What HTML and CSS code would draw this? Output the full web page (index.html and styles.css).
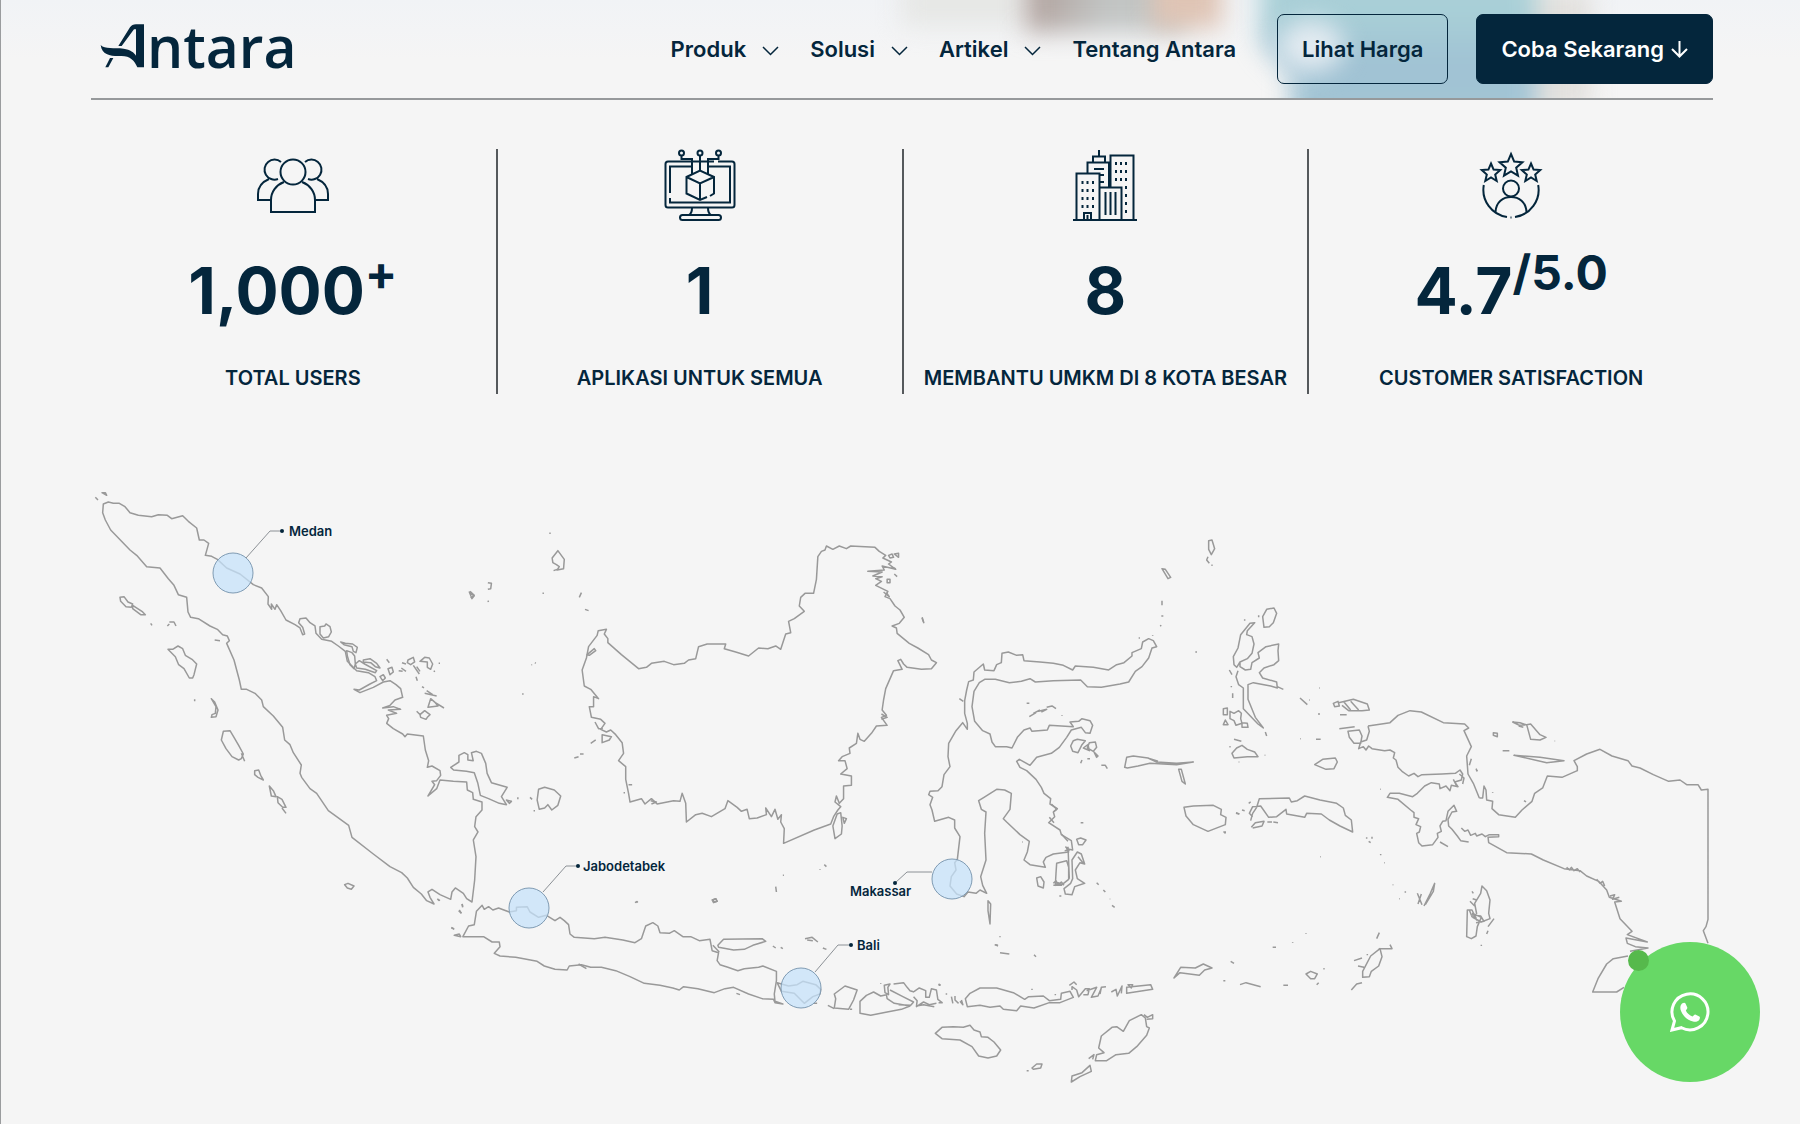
FILE: index.html
```html
<!DOCTYPE html>
<html lang="id">
<head>
<meta charset="utf-8">
<meta name="viewport" content="width=device-width, initial-scale=1">
<title>Antara</title>
<link rel="stylesheet" href="styles.css">
</head>
<body>
<header class="site-header">
  <div class="backdrop" aria-hidden="true">
    <span class="glow glow-sand"></span>
    <span class="glow glow-brown"></span>
    <span class="glow glow-peach"></span>
    <span class="glow glow-edge"></span>
    <span class="glow glow-blue"></span>
    <span class="glow glow-shine"></span>
  </div>
  <div class="header-inner">
    <a class="logo" href="#" aria-label="Antara">
      <svg class="logo-mark" viewBox="54 48 138 138" aria-hidden="true">
        <path d="M59 117C72 131 98 124 128 128C148 131 159 139 165 149V70H159L122 120H112L147 64Q153 55 165 55H189V184H169C161 164 147 150 122 150C92 151 63 149 59 117Z"/>
        <path d="M87 156H97L82 184H73Z"/>
      </svg>
      <span class="logo-text">ntara</span>
    </a>
    <nav class="nav">
      <button class="nav-item" type="button">Produk<svg class="chevron" viewBox="0 0 17 10" aria-hidden="true"><path d="M1 1l7.500 7.500L16 1"/></svg></button>
      <button class="nav-item" type="button">Solusi<svg class="chevron" viewBox="0 0 17 10" aria-hidden="true"><path d="M1 1l7.500 7.500L16 1"/></svg></button>
      <button class="nav-item" type="button">Artikel<svg class="chevron" viewBox="0 0 17 10" aria-hidden="true"><path d="M1 1l7.500 7.500L16 1"/></svg></button>
      <a class="nav-item" href="#">Tentang Antara</a>
    </nav>
    <div class="actions">
      <a class="btn btn-outline" href="#">Lihat Harga</a>
      <a class="btn btn-solid" href="#">Coba Sekarang<svg class="arrow" viewBox="0 0 17 18" aria-hidden="true"><path d="M8.500 1v15M1 9l7.500 7.500L16 9"/></svg></a>
    </div>
  </div>
</header>

<main class="page">
  <section class="stats">
    <div class="stat">
      <svg class="stat-icon" viewBox="0 0 72 72" aria-hidden="true">
        <circle cx="36" cy="23" r="12.500"/>
        <path d="M27 33C19 36 14 43 14 51V63H58V51C58 43 53 36 45 33"/>
        <path d="M24 13A10 10 0 1 0 21 30M12 30C5 33 1 38 1 45V51H14M48 13A10 10 0 1 1 51 30M60 30C67 33 71 38 71 45V51H58"/>
      </svg>
      <p class="stat-value">1,000<sup>+</sup></p>
      <p class="stat-label">TOTAL USERS</p>
    </div>
    <div class="stat">
      <svg class="stat-icon" viewBox="0 0 72 72" aria-hidden="true">
        <path d="M50 12.500H4Q1.500 12.500 1.500 15V56Q1.500 58.500 4 58.500H68Q70.500 58.500 70.500 56V15Q70.500 12.500 68 12.500H54"/>
        <path d="M28 17.500H6V44M6 49V53.500H66V17.500H44"/>
        <circle cx="17.500" cy="4" r="2.500"/><circle cx="36" cy="4" r="2.500"/><circle cx="54.500" cy="4" r="2.500"/>
        <path d="M17.500 6.500V10H28V25M36 6.500V21M54.500 6.500V10H44V25"/>
        <path d="M46 47L50 44.500V28L36 21.500L22.500 28V44.500L36 51L43 48M22.500 28L36 34.500L50 28M36 34.500V51"/>
        <path d="M28 59Q28 64 25 66M44 59Q44 64 47 66"/>
        <rect x="16" y="66" width="41" height="5" rx="2.500"/>
      </svg>
      <p class="stat-value">1</p>
      <p class="stat-label">APLIKASI UNTUK SEMUA</p>
    </div>
    <div class="stat">
      <svg class="stat-icon" viewBox="0 0 72 72" aria-hidden="true">
        <path d="M4 71H68M7.500 71V24.500H30.500V71M18.500 24.500V13.500H40V38M24 13.500V7.500H36V13.500M30 7.500V1M41.500 38V6.500H64.500V71M31 38.500H52.500V71M36.500 43V66M41.500 43V66M46.500 43V66M25 20H35M31 26H35M31 33H35M15 71V64H22V71M18.500 66V70"/>
        <path stroke-dasharray="3 5" d="M13.500 32V60M18.500 32V60M24 32V60M47 13V34M52 13V34M57 13V66"/>
      </svg>
      <p class="stat-value">8</p>
      <p class="stat-label">MEMBANTU UMKM DI 8 KOTA BESAR</p>
    </div>
    <div class="stat">
      <svg class="stat-icon" viewBox="0 0 72 72" aria-hidden="true">
        <path d="M36 5L39.200 12.600L47.400 13.300L41.200 18.700L43 26.700L36 22.500L29 26.700L30.800 18.700L24.600 13.300L32.800 12.600Z"/>
        <path d="M16 14.500L18.600 20.600L25.200 21.100L20.200 25.500L21.700 32L16 28.500L10.300 32L11.800 25.500L6.800 21.100L13.400 20.600Z"/>
        <path d="M56 14.500L58.600 20.600L65.200 21.100L60.200 25.500L61.700 32L56 28.500L50.300 32L51.800 25.500L46.800 21.100L53.400 20.600Z"/>
        <circle cx="36" cy="39.500" r="8"/>
        <path d="M20.500 63C21 53 28 48 36 48S51 53 51.500 63"/>
        <path d="M8.800 36A27.500 27.500 0 0 0 32 68M63.200 36A27.500 27.500 0 0 1 40 68M35.500 68.500H36.500"/>
      </svg>
      <p class="stat-value">4.7<sup>/5.0</sup></p>
      <p class="stat-label">CUSTOMER SATISFACTION</p>
    </div>
  </section>

  <svg class="map" viewBox="90 480 1623 620" role="img" aria-label="Peta Indonesia">
    <g class="coast">
      <!-- Sumatra and the islands off both of its coasts -->
      <g transform="translate(80 480) scale(.33333)">
        <path d="M70 72L85 66 100 70 118 70 135 80 150 98 175 106 215 110 235 104 262 106 275 116 308 107 325 124 350 144 358 180 372 180 386 190 380 212 376 226 395 229 412 238 440 264 480 282 520 314 545 324 565 350 564 372 575 388 574 372 585 388 590 374 602 392 618 420 645 434 660 444 668 464 674 462 668 442 656 428 660 416 678 414 690 428 705 438 708 460 725 478 755 484 775 498 796 514 802 544 830 572 865 578 885 590 890 602 870 612 838 630 822 628 840 638 880 622 910 606 930 602 948 614 962 626 968 652 945 660 930 676 908 684 940 680 962 688 925 690 950 700 920 706 926 716 920 730 940 746 968 762 975 770 982 762 1030 768 1036 810 1046 842 1042 862 1056 858 1080 872 1082 886 1070 902 1056 904 1064 914 1044 948 1070 926 1080 900 1120 904 1160 906 1162 930 1178 938 1180 958 1206 966 1206 990 1188 1010 1184 1040 1194 1056 1180 1080 1188 1130 1184 1200 1176 1266 1160 1256 1150 1240 1126 1224 1116 1236 1112 1258 1080 1244 1056 1228 1044 1236 1050 1252 1062 1272 1040 1262 1024 1242 1000 1222 982 1194 965 1178 930 1160 880 1122 816 1072 806 1036 745 992 710 940 690 926 665 892 660 880 664 855 640 818 630 794 614 780 608 742 580 708 550 680 545 660 525 640 500 628 484 628 478 600 462 540 440 490 448 482 442 468 428 464 412 448 390 438 355 416 332 412 324 396 320 352 295 344 282 316 265 296 240 264 200 260 170 226 150 210 92 150 76 120 68 98Z"/>
        <path d="M66 38l14 8 -4 -8zM46 52l8 8M120 352l12 -2 12 16 14 6 -4 10 -16 -2 -16 -16zM158 376l30 20 8 8 -14 0 -24 -18zM212 430l4 6M262 438l6 -6M268 426l14 0 6 12M404 480l16 2M264 508l14 0 16 -10 14 8 8 20 20 12 14 14 -8 32 -4 10 -10 0 -16 -28 -16 -12 -10 -24 -20 -20zM344 658v6M394 656l10 10 10 24 -6 20 -14 2 2 -8 10 -4 2 -20zM430 754l20 -2 12 20 14 24 14 26 -6 14 -8 4 -20 -10 -18 -24 -14 -26zM484 820l10 24M524 872l12 -2 6 16 8 14 -16 -8 -10 -8zM568 918l12 14 8 18 -14 -2zM592 950l14 8 12 24 -10 0 -14 -14zM606 984l12 16M794 1214l10 -4 18 8 -8 10 -12 -4z"/>
        <path d="M720 440l14 -2 4 -6 12 8 4 16 -8 14 -16 4 -10 -12zM782 486l14 4 22 2 14 10 -4 16 -8 -4 -4 -14 -24 -6zM800 512l16 6 8 10 2 24 -4 14 -12 -12 -8 -26zM826 552l12 -10 16 10 36 20 -4 6 -30 -10 -26 -4zM850 540l20 -4 20 14 10 14 -14 -4 -14 -12 -22 -2zM900 590l10 -6 6 10 -8 8zM920 538l8 10M924 566l12 -4 4 14 -10 8zM956 572l12 2M964 564l14 10M966 548l12 4M984 540l16 -8 4 14 -12 8 -10 -6zM1000 556l18 26M1010 560l10 14M1020 544l14 -12 14 2 10 18 -6 16 -10 -6 0 -16zM1062 572l2 4M1076 550h4M1008 590l4 12M1026 620l6 4M1034 640l36 8M1040 632l18 12M1044 682l8 -26 14 12 8 10zM1066 668l26 16M1010 694l12 12M1020 704l14 -12 16 12 -8 8 -4 6 -16 -6zM1168 336l14 12 -6 8zM1072 1256l6 6M1146 1272l2 10M1136 1292l8 8M1114 1344l8 2"/>
      </g>
      <!-- Bangka, Belitung and Kalimantan -->
      <g transform="translate(400 480) scale(.35714 .33333)">
        <path d="M142 862L165 846 165 826 180 818 190 824 190 840 205 842 200 818 214 814 228 820 240 850 244 880 256 908 300 922 284 950 298 974 278 970 248 956 225 946 218 910 208 878 186 874 150 870Z"/>
        <path d="M388 928L405 922 432 930 450 948 442 976 425 990 414 974 405 984 390 988 384 960ZM298 960l14 4 -6 6zM330 952v6M364 952l6 6M374 992h4M196 334l12 12 -10 8M246 308l10 2 -2 16 -8 2M246 362l2 4M418 160h4M426 234l16 -22 18 26 -2 28 -18 4 6 -10 -8 -6 -10 -6zM430 272l10 -4M399 340h4M508 338l-6 14M518 388l10 4M368 554l2 0M378 548l2 2M344 640v4M534 790l14 -10M504 822h10M488 834l12 -4"/>
        <path d="M555 452L578 448 572 462 582 476 582 488 620 524 668 566 690 562 704 550 740 544 766 554 796 550 808 540 828 536 836 500 860 492 912 492 908 506 940 516 976 528 1004 504 1030 506 1052 498 1066 508 1080 462 1094 458 1088 424 1104 416 1132 394 1118 378 1122 352 1134 340 1158 340 1166 298 1170 230 1180 214 1190 210 1194 198 1212 208 1230 198 1250 206 1262 198 1330 202 1342 214 1360 226 1352 234 1376 246 1368 252 1388 268 1350 258 1356 270 1310 274 1350 276 1324 288 1350 290 1332 296 1348 304 1332 316 1366 334 1358 350 1372 356 1386 378 1400 390 1412 412 1398 430 1378 438 1390 444 1392 460 1426 490 1450 504 1480 524 1488 540 1502 548 1488 566 1460 568 1420 562 1410 552 1402 538 1394 542 1406 568 1382 572 1360 626 1354 660 1350 690 1362 706 1348 712 1364 736 1334 738 1320 760 1300 784 1288 778 1282 760 1278 790 1258 804 1260 820 1238 830 1228 842 1246 842 1252 866 1234 882 1264 888 1264 916 1242 918 1242 956 1230 970 1222 948 1218 966 1234 980 1226 990 1214 1010 1206 1032 1160 1050 1074 1090 1076 1046 1066 1026 1068 1004 1058 1018 1050 988 1040 1010 1024 984 1026 1004 1000 1014 978 1016 972 988 956 994 944 982 918 962 910 986 872 1010 846 1000 828 1004 802 1026 800 970 790 940 784 964 766 962 720 972 704 956 686 972 676 956 644 966 640 940 632 898 632 860 612 842 626 820 622 788 604 764 590 750 578 756 562 748 574 730 562 718 536 712 530 680 542 680 542 650 556 656 534 628 516 618 510 570 522 534 528 500 552 466Z"/>
        <path d="M524 524l20 -18 4 6 -18 14zM546 726l10 20 12 0M566 764l26 6 -6 10 -20 8zM1368 226l10 -4 4 10 -10 2zM1384 222l12 -2 0 12zM1364 298l8 0 0 10 -8 0zM1384 282l8 8M1224 1002l10 -4 4 40 -2 24 -18 14 -6 -38zM1240 1012l10 4 -6 14zM1462 412l4 14M626 938h4M640 914l10 0M702 962l16 4 -14 6M1188 1154l6 6M1176 1168v2M1072 1186h3M1052 1220l2 16M662 1268l4 -4M874 1260l10 -4 4 8 -10 4zM1354 336l16 14 -8 -12M1348 702l16 10 -16 6M1376 262l12 4"/>
      </g>
      <!-- Java, Madura, Bali and Lombok -->
      <g transform="translate(430 830) scale(.35714 .33333)">
        <path d="M92 320L108 288 124 284 130 244 146 226 152 238 164 230 176 240 192 234 222 246 242 242 242 232 272 230 280 246 304 262 326 256 350 272 364 262 376 272 388 284 392 312 404 322 460 326 490 322 540 330 574 338 592 326 604 288 624 278 638 288 644 308 670 310 684 302 708 320 730 320 754 332 784 328 790 362 808 368 804 392 812 404 834 412 862 422 880 416 920 412 932 408 970 424 970 452 964 492 966 514 988 522 966 518 962 508 930 506 892 492 850 472 826 476 796 488 750 476 710 470 698 480 680 474 644 466 600 460 560 440 520 422 480 412 450 412 424 404 390 408 384 420 350 418 320 408 300 394 240 382 196 378 180 370 196 350 194 336 174 336 150 320Z"/>
        <path d="M806 346L822 328 930 326 940 334 904 346 880 358 850 360 808 352ZM792 346l18 20M416 402l22 14M960 348l8 6M982 352l6 4M1050 326l20 -4 16 14M1056 330l16 2M1100 354l10 4M858 490l10 4M60 292l8 6M68 316l14 -4 4 8zM22 208l6 4M90 222l2 8M82 240l6 10M574 218l6 -4M792 210l8 -4 4 8 -8 2z"/>
        <path d="M972 458L1004 468 1028 464 1044 454 1080 464 1094 478 1092 492 1072 500 1048 520 1020 490 984 484ZM1074 520h10M1132 492L1162 468 1196 480 1186 510 1172 538 1132 534 1136 506ZM1114 526l18 10M1176 538h6"/>
        <path d="M1204 514L1222 496 1242 486 1262 498 1278 494 1280 506 1300 520 1344 528 1320 538 1280 546 1234 556 1204 550ZM1272 466l16 -4 -6 10 2 22 -10 -6zM1298 462l28 -4 10 14 8 10 12 4M1288 480l36 20 30 16 -8 10 -34 -2M1356 484l14 -10 18 8 0 20 10 0 6 -26 14 4 4 28 12 10 -10 0M1354 500l10 12 -2 18 20 -14 16 8 20 -4M1362 528l20 -4 30 6M1424 462l6 4M1446 490v4M1460 500l4 20M1470 498l0 12 10 10M1484 514l8 10 -4 -14M1262 460v2"/>
      </g>
      <!-- Sulawesi -->
      <g transform="translate(840 500) scale(.33333)">
        <path d="M374 602L380 570 386 545 400 540 402 516 430 492 434 510 462 512 470 494 484 488 486 460 505 456 530 466 548 464 552 482 600 486 640 490 670 496 698 510 706 498 760 502 806 510 830 494 852 488 876 468 876 458 904 446 908 426 926 416 940 422 950 440 936 444 926 474 906 500 886 514 866 546 840 552 784 562 742 560 722 540 640 542 586 546 570 536 544 544 508 548 466 538 434 538 418 548 402 574 396 620 404 664 428 692 450 702 456 726 466 740 500 740 516 744 532 712 552 690 570 684 576 694 622 690 628 676 700 680 690 666 716 664 726 656 750 662 758 676 750 700 736 698 724 682 694 690 680 712 658 742 634 760 590 772 570 796 538 778 530 784 540 802 560 812 588 838 604 862 612 880 632 896 630 912 652 926 640 936 644 950 626 968 660 990 664 1004 694 1022 698 1050 680 1046 686 1056 640 1062 618 1072 610 1086 616 1102 570 1094 552 1080 562 1056 568 1024 540 1004 500 966 490 956 510 928 514 880 494 870 470 868 432 892 416 902 424 928 438 936 434 1000 438 1080 422 1130 428 1156 440 1180 420 1170 408 1180 384 1176 372 1190 350 1182 330 1158 334 1130 348 1110 344 1088 352 1078 360 1010 344 984 344 960 326 952 284 964 276 930 270 914 278 892 266 884 270 874 294 872 306 860 312 824 330 800 324 770 326 730 348 692 368 668 382 688 382 670 374 640Z"/>
        <path d="M358 596l12 8M444 1202l8 10 -2 60 -6 -40zM560 610h8M568 650l20 -12M580 640l20 -10M596 634l24 -6 -16 8M620 622l16 -4 12 8M666 646v2M700 722l12 -4 24 4 -10 12 -12 24 -16 -4 -6 -16zM730 744l14 -10 4 18zM748 728l18 -2 4 16 -10 12 -18 -10zM762 756l12 12 -4 4zM722 790l4 -10M742 776h8M784 796l12 0 6 10M854 802L860 772 880 768 924 774 950 786 1010 790 1060 786 1010 794 930 790 894 798 862 804ZM1016 808l8 0 12 44 -10 -8zM930 776l24 8M1150 996h8M1188 938l10 4M966 206l10 2 16 24 -8 4zM966 302l0 14M964 348h6M960 376l4 2M1106 122l10 -2 8 26 -10 18 -8 -16zM1104 170l-4 10 8 10M1114 196h4M1066 456h4M896 414h4M938 406v2M246 354l6 16"/>
        <path d="M710 1018l12 -4 16 6 -10 14 -12 0zM698 1136L696 1080 712 1056 724 1062 734 1092 720 1088 706 1110 712 1136 734 1150 704 1160 696 1184 676 1182 672 1166 692 1150ZM650 1090l30 -8 6 20 0 36 -20 16 -12 -6 -8 8 2 -36zM590 1134l12 -4 10 16 -2 18 -16 -6zM658 1188h6M640 1156h26M722 968h8M546 1026h2M770 1148l6 6M790 1170l6 6M810 1196v2M816 1216l8 6M684 1040l4 96M664 1002l20 22M628 952l14 16M464 1334l10 2M480 1308v2M640 1150l8 -8 6 12 10 -8 8 10M714 1070l16 20M676 1040l12 10 -14 2M634 912l16 16 -10 8"/>
      </g>
      <!-- Maluku and western Papua -->
      <g transform="translate(1160 520) scale(.33333)">
        <path d="M308 290L320 268 342 264 350 280 340 308 328 320 312 322ZM284 308L270 310 242 344 234 384 220 410 222 434 230 442 240 426 262 416 276 400 282 372 276 350 260 344 262 332ZM240 426l0 14 16 10 16 -2 4 -20 22 -14 -4 -16 24 -18 38 -8 -2 20 2 30 -14 12 -30 10 -14 14 10 16 42 12 2 18 -20 -6 -52 -10 -16 6 0 44 22 54 24 32 -16 -12 -44 -46 0 -62 -14 -10 -8 -24 6 -18M352 500l18 8M208 450l8 14M214 498v4M218 520v14M190 566l12 -2 0 20 -12 0zM190 614l6 -14 8 14zM210 574l12 6 14 -8 8 8 -2 16 4 14 -18 6 -6 -14 -12 -6zM246 608l16 2 2 12 -18 0zM216 700L230 684 246 676 262 688 284 696 294 710 262 710 222 714ZM222 658l22 6M208 680h4M314 706h2M236 726h2M316 636l4 12"/>
        <path d="M254 298v4M296 286v6M108 396h2M478 504h2M420 534l22 20M448 540h2M474 582h6M468 658h14M420 656h2M464 734L488 718 526 714 532 726 522 746 498 748ZM520 550l14 -6 4 14 -14 2zM536 548l44 -10 42 14 6 18 -22 2 -40 0 -20 -16M552 546l20 24M572 544l24 26M540 584h20M538 626l46 -6M272 846l-6 4M246 870l8 2M228 880l10 2M192 938h6M480 1010h2M660 808h2M620 952v4M636 950v6M626 964l6 4M662 1002v4M672 1028h2M698 1094h2M736 1114v4M718 1136h2"/>
        <path d="M72 862L100 858 160 856 184 868 182 884 198 892 196 914 144 934 100 914 78 888ZM272 902L278 880 290 862 298 836 388 834 394 846 412 842 434 828 480 840 530 850 550 864 556 886 574 900 578 936 540 918 508 900 484 882 440 880 434 892 380 882 378 868 350 890 326 892 302 858 278 860 268 880 278 890M274 922l12 -14 26 -4 -6 14 -28 6M322 906l14 0M340 906l14 2"/>
        <path d="M624 618L690 608 714 586 750 572 784 576 850 608 914 612 926 624 912 632 934 680 920 708 924 762 940 790 958 834M624 618l4 16 -8 26 -18 6 -6 20 14 -6 8 10 8 -12 10 8 38 6 16 -2 14 8 -4 16 8 6 6 22 12 12 20 14 16 -8 12 10 12 -6 60 -2 40 -2 14 -10 8 12 -4 18 -20 6 10 14 -20 -4 -4 16 -12 -14 -18 8 -2 -14 -24 -4 -20 10 -22 22 -14 10 -40 -10 -28 0 -8 12 32 6 38 32 10 8 0 14 14 4 -8 18 14 6 -4 16 -8 4 6 28 10 10 32 -4 16 -22 -2 -12 12 -6 -4 -16 8 -14 10 -2 6 -28 18 -18 8 18 -14 2 -12 22 2 20 10 10 16 20 10 14 24 4M564 634l34 -4 8 18 -4 22 -20 0 -14 -18zM898 762l14 12 -4 18M880 778l10 20M840 966l24 14M934 716l-6 20M950 750v4"/>
        <path d="M772 1120l14 34M784 1122l-10 30M792 1158l18 -36 14 -32 -4 24 -24 40M650 1256l8 -18M608 1372L608 1354 632 1308 660 1286 666 1310 656 1338 634 1354 628 1370ZM656 1286l40 0 -6 -12M582 1322l24 -8M594 1338l18 4M622 1302v4M574 1410l16 -18 16 -4M42 1374L62 1342 106 1344 130 1332 156 1344 134 1350 118 1366 60 1358ZM338 1282h10M212 1324l10 6M190 1382h6M240 1394l18 -6 44 12M370 1396h14M438 1362l14 -8 20 8 -8 14 -12 0zM470 1394l6 -6M398 1266v2M438 1240v2M490 1346h4"/>
      </g>
      <!-- Papua -->
      <g transform="translate(1440 680) scale(.33333)">
        <path d="M118 354L128 354 132 318 138 330 140 360 158 364 156 386 176 404 226 412 246 390 276 364 284 340 308 324 322 288 366 292 412 272 412 260 402 242 440 222 480 208 516 228 564 242 576 258 600 264 640 284 686 304 720 300 740 314 774 314 784 330 804 328 804 718 798 740 790 752 804 790M144 470L146 488 200 518 274 522 310 540 372 566 420 572 440 588 476 604 500 630 508 652 544 664 524 666 540 716 576 754 562 764 622 786 558 774 562 790 586 800 624 804 570 814M564 828L520 836 500 852 474 896 458 936 530 936 552 922M64 444l10 10 10 -4 8 16 14 -6 4 8 16 -6 10 8 12 -6 28 0 0 6 -32 2M380 562l8 8 6 -8 8 10 10 -6 8 10M470 598l10 12 8 -6 6 14M510 648l14 -4 -6 14 20 -6"/>
        <path d="M222 226L300 232 372 242 320 248ZM260 134L272 132 300 164 318 172 300 180 272 178ZM218 126l22 2 18 6 -20 2zM236 138l14 4M160 158l12 2 0 10 -12 -4zM188 212h20M158 336v2M344 182v2M108 266l4 8M252 362l6 4M80 770L82 690 96 690 110 720 98 700 124 712 112 740 108 768 94 776ZM110 702L104 670 122 640 126 618 140 632 150 660 146 700 150 716 124 726 98 712M98 656l12 4M90 664l14 14M96 634l4 6M92 704l30 4 10 16 -24 4M88 690l8 20 14 4M144 740l18 -24M140 762l4 -10M124 794v4"/>
      </g>
      <!-- Flores, Sumba and Timor -->
      <g transform="translate(900 900) scale(.33333)">
        <path d="M196 296L210 280 240 264 290 264 340 278 374 298 386 290 430 288 448 302 482 298 484 280 510 274 520 292 480 308 448 308 402 324 362 318 350 332 310 328 300 318 270 322 240 316 202 320ZM508 256l14 -10 8 8M516 270l0 -10 14 10 6 20 20 -24 12 0 -4 18 -14 0M560 272l30 -10 -16 30 20 -4 10 -24M600 282l4 -20 14 -2M634 276l14 -8 4 20 14 -30 -2 22M680 262l72 -8 6 14 -78 12zM684 254l14 0 -4 10z"/>
        <path d="M106 400L126 382 160 380 190 382 210 376 222 390 240 396 244 410 264 412 282 426 302 450 290 468 264 474 236 468 216 440 180 420 126 416ZM586 482L590 464 612 458 596 444 604 408 636 382 650 380 670 394 688 362 724 344 736 354 740 380 748 384 740 406 710 440 686 460 648 464 620 482ZM732 344l10 8 16 -8 0 12 -18 2M566 476l16 -12 -4 14M514 546L516 528 546 518 570 496 574 514 540 530ZM396 504l14 -12 16 0 -4 12 -22 4zM380 512h6M286 134l8 4M300 158l28 4M402 164l6 6M300 110v2M396 266v4M466 282v4M118 252v6"/>
      </g>
    </g>

    <g class="pins">
      <circle cx="233" cy="573" r="20"/>
      <circle cx="529" cy="908" r="20"/>
      <circle cx="801" cy="988" r="20"/>
      <circle cx="952" cy="879" r="20"/>
    </g>
    <g class="leaders">
      <path d="M246 558L270 531H282M543 892L566 866H578M815 972L838 945H851M932 872H907L895 883"/>
    </g>
    <g class="leader-dots">
      <circle cx="282" cy="531" r="2"/>
      <circle cx="578" cy="866" r="2"/>
      <circle cx="851" cy="945" r="2"/>
      <circle cx="895" cy="883" r="2"/>
    </g>
    <g class="city-labels">
      <text x="289" y="536">Medan</text>
      <text x="583" y="871">Jabodetabek</text>
      <text x="857" y="950">Bali</text>
      <text x="850" y="896">Makassar</text>
    </g>
  </svg>
</main>

<a class="whatsapp" href="#" aria-label="WhatsApp">
  <span class="whatsapp-dot"></span>
  <svg class="whatsapp-icon" viewBox="0 0 40 40" aria-hidden="true">
    <path class="bubble" d="M2 38L4.500 29A18 18 0 1 1 11.500 35.700Z"/>
    <path class="handset" d="M12 11.500C13.500 10.500 15 10.500 15.500 11.500L17.300 15.500C17.600 16.300 16.500 17.500 15.800 18.400C17 21 19.500 23.300 22.500 24.600C23.500 23.500 24.500 22.200 25.300 22.500L29.300 24.500C30.300 25 30 26.500 29.300 27.700C28 29.600 25.500 30.200 23 29.500C16.500 27.600 12.200 23.300 10.500 17.500C10 15.300 10.500 12.700 12 11.500Z"/>
  </svg>
</a>
</body>
</html>
```
FILE: styles.css
```css
* {
  box-sizing: border-box;
}

body {
  margin: 0;
  min-height: 100vh;
  border-left: 1px solid #9a9c9e;
  background: #f5f5f5;
  color: #04263c;
  font-family: Inter, "Liberation Sans", sans-serif;
}

a {
  color: inherit;
  text-decoration: none;
}

.site-header {
  position: sticky;
  top: 0;
  z-index: 2;
  padding: 0 87px 0 90px;
  background: linear-gradient(#f1f3f6, #f5f5f5 60%);
}

.header-inner {
  position: relative;
  display: flex;
  align-items: center;
  height: 100px;
  border-bottom: 2px solid #96999b;
}

.backdrop {
  position: absolute;
  inset: 0 0 2px;
  overflow: hidden;
}

.glow {
  position: absolute;
  filter: blur(12px);
}

.glow-sand {
  left: 50%;
  top: -20px;
  width: 130px;
  height: 46px;
  background: #e6e7e5;
}

.glow-brown {
  left: 57%;
  top: -30px;
  width: 160px;
  height: 62px;
  background: linear-gradient(90deg, #b0a09b, #c2c5c4 50%);
}

.glow-peach {
  left: 64%;
  top: -30px;
  width: 70px;
  height: 58px;
  background: #dfc4b4;
}

.glow-edge {
  left: 83%;
  top: -10px;
  width: 98px;
  height: 120px;
  background: #e2e0dd;
}

.glow-blue {
  left: 70%;
  top: -30px;
  width: 276px;
  height: 160px;
}

.glow-blue::before {
  content: "";
  display: block;
  height: 100%;
  background: linear-gradient(#a9d0d7 25%, #a0c2d4 60%, #a4c7d5);
  clip-path: polygon(0 0, 100% 0, 100% 100%, 11% 100%, 11% 66%, 0 46%);
}

.glow-shine {
  left: 71%;
  top: 20px;
  width: 66px;
  height: 52px;
  border-radius: 50%;
  background: #e3ebf1;
}

.logo {
  display: flex;
  align-items: baseline;
  gap: 2px;
  padding: 0 0 8px 8px;
}

.logo-mark {
  width: 46px;
  height: 46px;
  fill: #04263c;
}

.logo-text {
  font: 600 57px/46px "Open Sans", "Noto Sans", sans-serif;
}

.nav {
  display: flex;
  align-items: center;
  gap: 31px;
  margin-left: auto;
}

.nav-item {
  display: flex;
  align-items: center;
  gap: 16px;
  padding: 0;
  border: 0;
  background: none;
  color: inherit;
  font: 600 22px/28px Inter, "Liberation Sans", sans-serif;
  white-space: nowrap;
}

.chevron,
.arrow {
  fill: none;
  stroke: currentColor;
  stroke-width: 2;
}

.chevron {
  width: 17px;
  height: 10px;
  margin-top: 4px;
  stroke-width: 1.5;
}

.arrow {
  width: 17px;
  height: 18px;
}

.actions {
  display: flex;
  gap: 28px;
  margin-left: 41px;
}

.btn {
  display: flex;
  align-items: center;
  gap: 7px;
  height: 70px;
  padding: 0 24px;
  border: 1px solid #04263c;
  border-radius: 7px;
  font-size: 22px;
  font-weight: 600;
  white-space: nowrap;
}

.btn-solid {
  background: #04263c;
  color: #fff;
}

.page {
  padding: 49px 87px 24px 89px;
}

.stats {
  display: grid;
  grid-template-columns: repeat(4, 1fr);
}

.stat {
  display: flex;
  flex-direction: column;
  align-items: center;
  height: 245px;
}

.stat + .stat {
  border-left: 2px solid #55595c;
}

.stat-icon {
  width: 72px;
  height: 72px;
  fill: none;
  stroke: #04263c;
  stroke-width: 2;
}

.stat-value {
  margin: 30px 0 0;
  font-size: 64px;
  font-weight: 700;
  line-height: 80px;
}

.stat-value sup {
  position: relative;
  top: -24px;
  font-size: 48px;
  line-height: 0;
  vertical-align: baseline;
}

.stat-label {
  margin: 33px 0 0;
  font-size: 20px;
  font-weight: 600;
  line-height: 28px;
  white-space: nowrap;
}

.map {
  display: block;
  width: 100%;
  margin-top: 86px;
}

.coast path {
  fill: none;
  stroke: #999;
  stroke-width: 1.5;
  stroke-linejoin: round;
  vector-effect: non-scaling-stroke;
}

.pins circle {
  fill: rgb(197 226 250 / 75%);
  stroke: #7f9bb3;
}

.leaders path {
  fill: none;
  stroke: #8c9196;
}

.leader-dots circle {
  fill: #04263c;
}

.city-labels text {
  fill: #04263c;
  font-size: 13px;
  font-weight: 600;
}

.whatsapp {
  position: fixed;
  right: 40px;
  bottom: 42px;
  z-index: 3;
  display: grid;
  place-items: center;
  width: 140px;
  height: 140px;
  border-radius: 50%;
  background: #67d866;
}

.whatsapp-dot {
  position: absolute;
  top: 8px;
  left: 8px;
  width: 21px;
  height: 21px;
  border-radius: 50%;
  background: #56b94c;
}

.whatsapp-icon {
  width: 40px;
  height: 40px;
}

.bubble {
  fill: none;
  stroke: #fff;
  stroke-width: 3;
}

.handset {
  fill: #fff;
}
```
